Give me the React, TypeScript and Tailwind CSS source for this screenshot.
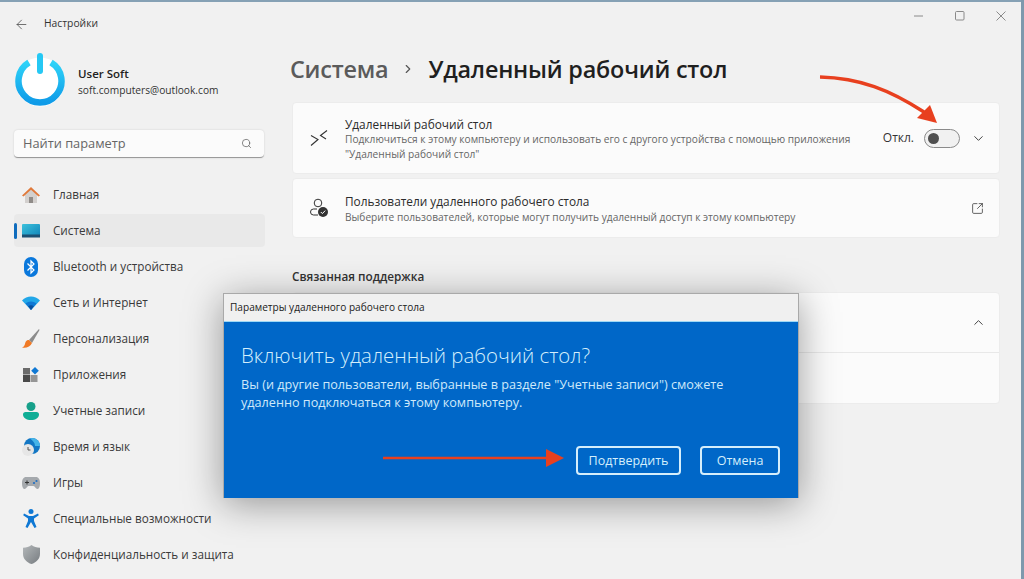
import { ChevronDown, ChevronRight, ChevronUp, Search, SquareArrowOutUpRight, ArrowLeft } from 'lucide-react';

const uiFont = "font-['Open_Sans','Noto_Sans',sans-serif]";

function HomeIcon() {
  return (
    <svg width="20" height="20" viewBox="0 0 20 20">
      <path d="M4 9.500V18h12V9.500L10 4z" fill="#d3d0ce" />
      <path d="M8 18v-6h4v6z" fill="#8f8b88" />
      <path d="M1 10.500 10 2l9 8.500-1.500 1L10 4.800 2.500 11.500z" fill="#e0793a" />
    </svg>
  );
}

function SystemIcon() {
  return (
    <svg width="18" height="14" viewBox="0 0 18 14">
      <defs>
        <linearGradient id="sys" x1="0" y1="0" x2="1" y2="1">
          <stop offset="0" stopColor="#3cc2dc" />
          <stop offset="1" stopColor="#0f82b8" />
        </linearGradient>
      </defs>
      <rect width="18" height="13" rx="1" fill="url(#sys)" />
      <rect y="10.500" width="18" height="3" fill="#1b4f73" />
    </svg>
  );
}

function BluetoothIcon() {
  return (
    <svg width="16" height="20" viewBox="0 0 16 20">
      <rect x="1" y="0" width="14" height="20" rx="7" fill="#0a78dc" />
      <path d="M4.500 6.500 11 13l-3 3V4l3 3-6.500 6.500" fill="none" stroke="#fff" strokeWidth="1.200" />
    </svg>
  );
}

function WifiIcon() {
  return (
    <svg width="18" height="14" viewBox="0 0 18 14">
      <path d="M0 4.500C5-1 13-1 18 4.500L9 14z" fill="#22a7e8" />
      <path d="M3.500 7.500c3.200-2.700 7.800-2.700 11 0L9 14z" fill="#0f78d4" />
      <path d="M6.200 10.200c1.700-1.200 3.900-1.200 5.600 0L9 14z" fill="#094f9e" />
    </svg>
  );
}

function BrushIcon() {
  return (
    <svg width="18" height="20" viewBox="0 0 18 20">
      <path d="M17 0 7 11l3 3L17.500 1z" fill="#8c8c8c" />
      <path d="M7 11c-3 0-3.500 2-4 4-.3 1.500-1.500 3-3 3.500 4 .8 8.500-.5 10-4.500z" fill="#f07a26" />
    </svg>
  );
}

function AppsIcon() {
  return (
    <svg width="16" height="15" viewBox="0 0 16 15">
      <rect x="0" y="1" width="7" height="6.500" fill="#6b6b6b" />
      <rect x="0" y="8" width="7" height="7" fill="#4a4a4a" />
      <rect x="7.500" y="8" width="7" height="7" fill="#969696" />
      <path d="M12 0l3.800 3.800L12 7.600 8.200 3.800z" fill="#0f78d4" />
    </svg>
  );
}

function UserIcon() {
  return (
    <svg width="16" height="18" viewBox="0 0 16 18">
      <circle cx="8" cy="4.500" r="4.500" fill="#17a08a" />
      <path d="M0 12.500C0 11 1 10 2.500 10h11c1.500 0 2.500 1 2.500 2.500 0 3.500-3.500 5.500-8 5.500s-8-2-8-5.500z" fill="#0fae96" />
    </svg>
  );
}

function TimeIcon() {
  return (
    <svg width="18" height="18" viewBox="0 0 18 18">
      <circle cx="10" cy="8" r="8" fill="#1377c4" />
      <path d="M10 0a8 8 0 0 1 8 8h-5c0-3-2-5-5-7.700z" fill="#46b4e8" />
      <circle cx="6" cy="12" r="6" fill="#e6e6e6" />
      <path d="M6 9v3h2.500" fill="none" stroke="#555" strokeWidth="1" />
    </svg>
  );
}

function GamesIcon() {
  return (
    <svg width="18" height="12" viewBox="0 0 18 12">
      <path d="M4 0h10c2.500 0 4 2.500 4 6s-1 6-2.500 6c-2 0-2.500-3-4-3h-5c-1.500 0-2 3-4 3C1 12 0 9.500 0 6s1.500-6 4-6z" fill="#a5a9ad" />
      <path d="M3 5.500h4M5 3.500v4" stroke="#333" strokeWidth="1" />
      <circle cx="12" cy="6" r="1.100" fill="#1f6fc4" />
      <circle cx="14.500" cy="4" r="1.100" fill="#1f6fc4" />
    </svg>
  );
}

function AccessIcon() {
  return (
    <svg width="16" height="19" viewBox="0 0 16 19">
      <circle cx="8" cy="2.600" r="2.500" fill="#0f78d4" />
      <path d="M1 4.500l5 2.500h4l5-2.500.8 1.700L11 9.500V12l2.500 6-2 1L8 13l-3.500 6-2-1L5 12V9.500L.2 6.200z" fill="#0f78d4" />
    </svg>
  );
}

function ShieldIcon() {
  return (
    <svg width="17" height="19" viewBox="0 0 17 19">
      <defs>
        <linearGradient id="shield" x1="0" y1="0" x2="1" y2="1">
          <stop offset="0" stopColor="#b4b8ba" />
          <stop offset="1" stopColor="#777c80" />
        </linearGradient>
      </defs>
      <path d="M8.500 0c2.500 1.800 5 2.500 8.500 2.700v6C17 14 13 17.500 8.500 19 4 17.500 0 14 0 8.700v-6C3.500 2.500 6 1.800 8.500 0z" fill="url(#shield)" />
    </svg>
  );
}

const navItems = [
  { label: 'Главная', icon: HomeIcon },
  { label: 'Система', icon: SystemIcon, active: true },
  { label: 'Bluetooth и устройства', icon: BluetoothIcon },
  { label: 'Сеть и Интернет', icon: WifiIcon },
  { label: 'Персонализация', icon: BrushIcon },
  { label: 'Приложения', icon: AppsIcon },
  { label: 'Учетные записи', icon: UserIcon },
  { label: 'Время и язык', icon: TimeIcon },
  { label: 'Игры', icon: GamesIcon },
  { label: 'Специальные возможности', icon: AccessIcon },
  { label: 'Конфиденциальность и защита', icon: ShieldIcon },
];

function Sidebar() {
  return (
    <aside className="w-[292px] shrink-0 pl-[14px] pr-[27px]">
      <div className="flex h-[44px] items-center">
        <ArrowLeft size={15} strokeWidth={1.2} className="text-[#444]" />
        <span className="ml-[15px] text-[10.300px] text-[#333]">Настройки</span>
      </div>
      <div className="mt-[6px] flex h-[55px] items-center">
        <svg width="52" height="55" viewBox="0 0 52 55" className="shrink-0">
          <defs>
            <linearGradient id="power" x1="0" y1="0" x2="0" y2="1">
              <stop offset="0" stopColor="#2fd3f8" />
              <stop offset="1" stopColor="#0f9be8" />
            </linearGradient>
          </defs>
          <circle cx="26" cy="30" r="24.500" fill="#fff" />
          <path d="M15 10.500a21.500 21.500 0 1 0 22 0" fill="none" stroke="url(#power)" strokeWidth="6.500" />
          <rect x="23" y="1" width="6" height="21" rx="3" fill="#26c8f4" />
        </svg>
        <div className="mt-[5px] ml-[12px]">
          <div className="text-[11.500px] leading-[16px] font-semibold text-[#222]">User Soft</div>
          <div className="text-[10.200px] leading-[16px] text-[#333]">soft.computers@outlook.com</div>
        </div>
      </div>
      <div className="mt-[23px] flex h-[28px] w-[250px] items-center justify-between rounded-[4px] border-b border-b-[#9a9a9a] bg-[#fbfbfb] pr-[12px] pl-[9px] shadow-[0_0_2px_rgba(0,0,0,0.15)]">
        <span className="text-[12.800px] text-[#666]">Найти параметр</span>
        <Search size={11} strokeWidth={1.5} className="text-[#555]" />
      </div>
      <nav className="mt-[20px] flex w-[251px] flex-col gap-[3px]">
        {navItems.map((item) => {
          const Icon = item.icon;
          return (
            <div
              key={item.label}
              className={`relative flex h-[33px] items-center rounded-[4px] ${item.active ? 'bg-[#e9e9e9]' : ''}`}
            >
              {item.active && <span className="absolute top-[9px] left-0 h-[16px] w-[3px] rounded-full bg-[#0f6cbd]" />}
              <span className="flex w-[39px] items-center pl-[6px]">
                <span className="flex w-[22px] justify-center">
                  <Icon />
                </span>
              </span>
              <span className="text-[11.700px] text-[#3a3a3a]">{item.label}</span>
            </div>
          );
        })}
      </nav>
    </aside>
  );
}

function Toggle() {
  return (
    <div className="flex h-[19px] w-[36px] items-center rounded-full border border-[#8a8a8a] bg-[#f1f1f1] pl-[3px]">
      <span className="h-[11px] w-[11px] rounded-full bg-[#4f4f4f]" />
    </div>
  );
}

function Main() {
  return (
    <main className="w-[708px] shrink-0">
      <div className="flex h-[100px] items-start pt-[47px]">
        <h1 className="-ml-[2px] flex items-center text-[23.400px] leading-[40px] font-semibold tracking-[-0.2px]">
          <span className="text-[#5b5b5b]">Система</span>
          <ChevronRight size={14} strokeWidth={2} className="mx-[13px] text-[#555]" />
          <span className="text-[#1f1f1f]">Удаленный рабочий стол</span>
        </h1>
      </div>
      <section className="flex h-[72px] items-center rounded-[4px] border border-[#ececec] bg-[#fbfbfb]">
        <svg width="18" height="18" viewBox="0 0 18 18" className="ml-[17px] shrink-0 text-[#333]">
          <path d="M1 6.500 8 10.500 1 16.500M17 1.500 10.500 6.500 16 10" fill="none" stroke="currentColor" strokeWidth="1.100" />
        </svg>
        <div className="mt-[1px] ml-[17px] w-[525px]">
          <div className="text-[11.850px] leading-[16px] text-[#2b2b2b]">Удаленный рабочий стол</div>
          <div className="text-[10.170px] leading-[15px] text-[#666]">
            Подключиться к этому компьютеру и использовать его с другого устройства с помощью приложения
            <br />
            "Удаленный рабочий стол"
          </div>
        </div>
        <span className="ml-auto text-[12px] text-[#333]">Откл.</span>
        <span className="ml-[10px]">
          <Toggle />
        </span>
        <ChevronDown size={15} strokeWidth={1.6} className="mr-[13px] ml-[11px] text-[#444]" />
      </section>
      <section className="mt-[4px] flex h-[60px] items-center rounded-[4px] border border-[#ececec] bg-[#fbfbfb]">
        <svg width="20" height="20" viewBox="0 0 20 20" className="ml-[16px] shrink-0 text-[#333]">
          <circle cx="9" cy="5" r="3.800" fill="none" stroke="currentColor" strokeWidth="1" />
          <path d="M8 11H4.500a3 3 0 0 0 0 6H9" fill="none" stroke="currentColor" strokeWidth="1" />
          <circle cx="14" cy="14" r="5" fill="#333" />
          <path d="M11.800 14l1.600 1.600 2.800-3" fill="none" stroke="#fff" strokeWidth="1" />
        </svg>
        <div className="mt-[1px] ml-[16px]">
          <div className="text-[11.850px] leading-[16px] text-[#2b2b2b]">Пользователи удаленного рабочего стола</div>
          <div className="mt-[1px] text-[10.170px] leading-[15px] text-[#666]">
            Выберите пользователей, которые могут получить удаленный доступ к этому компьютеру
          </div>
        </div>
        <SquareArrowOutUpRight size={13} strokeWidth={1.4} className="mr-[15px] ml-auto text-[#333]" />
      </section>
      <h2 className="mt-[30px] text-[11.750px] leading-[17px] font-semibold text-[#333]">Связанная поддержка</h2>
      <section className="mt-[7px] h-[112px] rounded-[4px] border border-[#ececec] bg-[#fbfbfb]">
        <div className="flex h-[60px] items-center justify-end border-b border-[#e8e8e8] pr-[13px]">
          <ChevronUp size={15} strokeWidth={1.6} className="text-[#444]" />
        </div>
      </section>
    </main>
  );
}

function Dialog() {
  return (
    <div className="absolute top-[293px] left-[223px] h-[205px] w-[576px] border border-[#a9a9a9] shadow-[0_6px_36px_rgba(0,0,0,0.38)]">
      <div className="flex h-[27px] items-center bg-[#f0f0f0] pl-[6px] text-[10.100px] text-[#222]">
        Параметры удаленного рабочего стола
      </div>
      <div className="h-[177px] border-t border-[#9ed8f5] bg-[#0067c8] px-[17px] pt-[19px]">
        <div className="text-[20.400px] leading-[28px] font-light text-[#d5effc]">Включить удаленный рабочий стол?</div>
        <p className="mt-[6px] text-[12.650px] leading-[18px] text-[#cfe9fa]">
          Вы (и другие пользователи, выбранные в разделе "Учетные записи") сможете
          <br />
          удаленно подключаться к этому компьютеру.
        </p>
        <div className="mt-[35px] flex justify-end gap-[19px] pr-[1px]">
          <button className="h-[29px] w-[105px] rounded-[4px] border-2 border-[#d5eefb] pt-[1px] text-[12.500px] text-[#d5effc]">
            Подтвердить
          </button>
          <button className="h-[29px] w-[80px] rounded-[4px] border-2 border-[#d5eefb] pt-[1px] text-[12.500px] text-[#d5effc]">
            Отмена
          </button>
        </div>
      </div>
    </div>
  );
}

export default function App() {
  return (
    <div className={`relative h-[579px] w-[1024px] overflow-hidden bg-[#f1f1f1] ${uiFont}`}>
      <div className="h-[2px] bg-[#86a1b5]" />
      <div className="flex">
        <Sidebar />
        <Main />
      </div>

      {/* window controls */}
      <div className="absolute top-[11px] right-[18px] flex items-center gap-[31px] text-[#8a8a8a]">
        <svg width="10" height="10" viewBox="0 0 10 10">
          <path d="M0 5h9" stroke="currentColor" strokeWidth="1" />
        </svg>
        <svg width="10" height="10" viewBox="0 0 10 10">
          <rect x="0.500" y="0.500" width="8.500" height="8.500" rx="1" fill="none" stroke="currentColor" strokeWidth="1" />
        </svg>
        <svg width="10" height="10" viewBox="0 0 10 10">
          <path d="M.5.5l9 9M9.500.5l-9 9" stroke="currentColor" strokeWidth="1" />
        </svg>
      </div>
      <div className="absolute top-0 right-0 h-full w-[3px] bg-[#7e99ad]" />

      <Dialog />

      {/* annotation arrows */}
      <svg className="absolute top-0 left-0" width="1024" height="579" viewBox="0 0 1024 579">
        <path d="M820 77C860 78 890 90 924 112" fill="none" stroke="#e8401f" strokeWidth="3.500" />
        <path d="M937 123 917 118 930 105z" fill="#e8401f" />
        <path d="M383 458H548" stroke="#e8401f" strokeWidth="2.500" />
        <path d="M564 458 546 449V467z" fill="#e8401f" />
      </svg>
    </div>
  );
}
